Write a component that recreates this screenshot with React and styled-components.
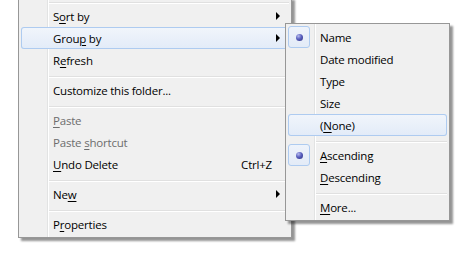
import React from "react";
import styled, { createGlobalStyle } from "styled-components";

const GlobalStyle = createGlobalStyle`
  html, body {
    margin: 0;
    padding: 0;
    background: #ffffff;
  }
  body {
    font-family: "Open Sans", "Noto Sans", "Liberation Sans", sans-serif;
    font-size: 11.5px;
    letter-spacing: -0.2px;
    color: #000;
    overflow: hidden;
  }
`;

const Page = styled.div`
  width: 467px;
  height: 263px;
  overflow: hidden;
  padding-left: 18px;
  box-sizing: border-box;
`;

const Menu = styled.div`
  position: relative;
  box-sizing: border-box;
  width: ${(p) => p.$width}px;
  border: 1px solid #979797;
  border-top: ${(p) => (p.$open ? "0" : "1px solid #979797")};
  padding: ${(p) => (p.$open ? "0 2px 2px" : "2px")};
  margin-top: ${(p) => (p.$open ? "-3px" : "0")};
  background: linear-gradient(
    to right,
    #f0f0f0 28px,
    #e2e3e3 28px 29px,
    #ffffff 29px 30px,
    #f0f0f0 30px
  );
  box-shadow: 3px 3px 2px rgba(0, 0, 0, 0.42);
  display: flex;
  flex-direction: column;
`;

const SubMenu = styled(Menu)`
  position: absolute;
  left: 264px;
  top: -4px;
  z-index: 2;
`;

const Row = styled.div`
  position: relative;
  height: 22px;
  display: flex;
  align-items: center;
  border-radius: 3px;
  color: ${(p) => (p.$disabled ? "#6d6d6d" : "#000")};
  background: ${(p) =>
    p.$hover
      ? "linear-gradient(to bottom, #f1f5fb, #e2ebf8)"
      : "transparent"};
  box-shadow: ${(p) => (p.$hover ? "inset 0 0 0 1px #aecbf0" : "none")};
`;

const IconSlot = styled.div`
  width: 32px;
  height: 22px;
  flex: none;
  display: flex;
  align-items: center;
`;

const CheckBox = styled.div`
  width: 22px;
  height: 22px;
  box-sizing: border-box;
  border: 1px solid #aecbf0;
  border-radius: 3px;
  background: linear-gradient(to bottom, #eef3fb, #e3ebf7);
  display: flex;
  align-items: center;
  justify-content: center;
`;

const Bullet = styled.div`
  width: 7px;
  height: 7px;
  border-radius: 50%;
  background: radial-gradient(
    circle at 35% 30%,
    #b7bbef 0%,
    #5a60bf 45%,
    #2a2c7c 100%
  );
`;

const Label = styled.span`
  flex: 1;
  white-space: nowrap;
  line-height: 16px;
  padding-top: 1px;
`;

const Key = styled.span`
  text-decoration: underline;
  text-underline-offset: 2px;
`;

const Shortcut = styled.span`
  white-space: nowrap;
  line-height: 16px;
  padding-top: 1px;
`;

const ArrowSlot = styled.div`
  width: 17px;
  flex: none;
  display: flex;
  align-items: center;
  padding-left: 4px;
  box-sizing: border-box;
`;

const Arrow = styled.div`
  width: 0;
  height: 0;
  border-left: 4px solid #000;
  border-top: 4px solid transparent;
  border-bottom: 4px solid transparent;
`;

const Separator = styled.div`
  height: 8px;
  box-sizing: border-box;
  padding-top: 5px;
  margin-left: 28px;
  &::after {
    content: "";
    display: block;
    height: 0;
    border-top: 1px solid #e0e0e0;
    border-bottom: 1px solid #ffffff;
  }
`;

const groupItems = [
  { label: "Name", checked: true },
  { label: "Date modified" },
  { label: "Type" },
  { label: "Size" },
  { label: "(None)", key: 1, hover: true },
  { sep: true },
  { label: "Ascending", key: 0, checked: true },
  { label: "Descending", key: 0 },
  { sep: true },
  { label: "More...", key: 0 },
];

const mainItems = [
  { sep: true },
  { label: "Sort by", key: 1, arrow: true },
  { label: "Group by", key: 4, arrow: true, hover: true, sub: groupItems },
  { label: "Refresh", key: 1 },
  { sep: true },
  { label: "Customize this folder..." },
  { sep: true },
  { label: "Paste", key: 0, disabled: true },
  { label: "Paste shortcut", key: 6, disabled: true },
  { label: "Undo Delete", key: 0, shortcut: "Ctrl+Z" },
  { sep: true },
  { label: "New", key: 2, arrow: true },
  { sep: true },
  { label: "Properties", key: 1 },
];

function ItemLabel({ text, at }) {
  if (at === undefined) return <Label>{text}</Label>;
  return (
    <Label>
      {text.slice(0, at)}
      <Key>{text[at]}</Key>
      {text.slice(at + 1)}
    </Label>
  );
}

function MenuItems({ items }) {
  return items.map((item, i) => {
    if (item.sep) return <Separator key={i} />;
    return (
      <Row key={i} $hover={item.hover} $disabled={item.disabled}>
        <IconSlot>
          {item.checked && (
            <CheckBox>
              <Bullet />
            </CheckBox>
          )}
        </IconSlot>
        <ItemLabel text={item.label} at={item.key} />
        {item.shortcut && <Shortcut>{item.shortcut}</Shortcut>}
        <ArrowSlot>{item.arrow && <Arrow />}</ArrowSlot>
        {item.sub && (
          <SubMenu $width={165}>
            <MenuItems items={item.sub} />
          </SubMenu>
        )}
      </Row>
    );
  });
}

export default function App() {
  return (
    <Page>
      <GlobalStyle />
      <Menu $width={274} $open>
        <MenuItems items={mainItems} />
      </Menu>
    </Page>
  );
}
